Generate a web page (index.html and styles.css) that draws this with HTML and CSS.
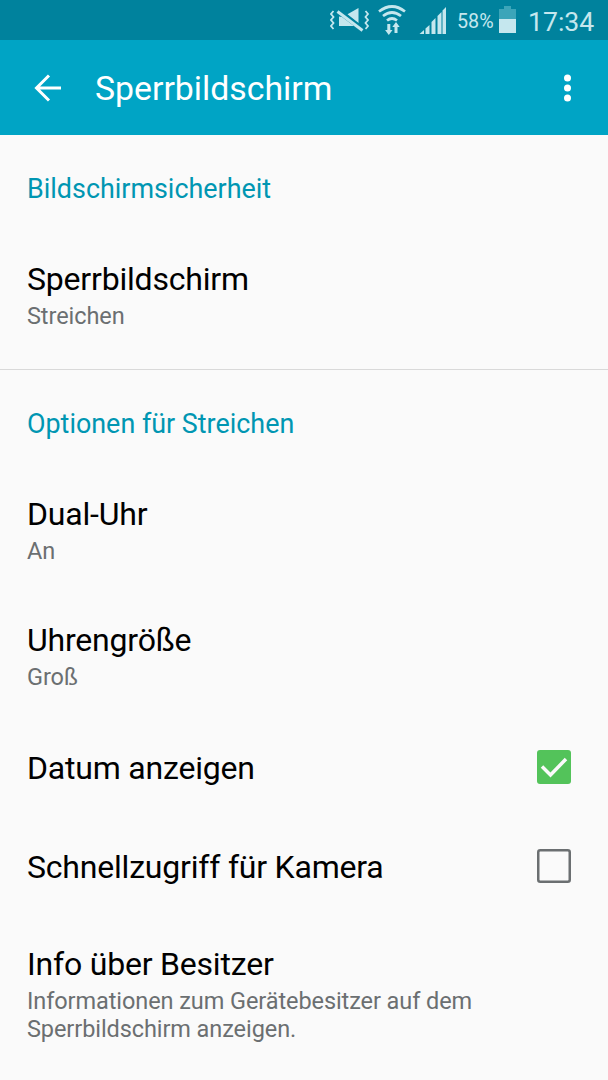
FILE: index.html
```html
<!DOCTYPE html>
<html lang="de">
<head>
<meta charset="utf-8">
<title>Sperrbildschirm</title>
<link rel="stylesheet" href="styles.css">
</head>
<body>
<div class="statusbar">
  <svg class="status-icons" width="127" height="40" viewBox="0 0 127 40">
    <g fill="none" stroke="#c5e7ee" stroke-width="1.800">
      <path d="M3.500 11l-2.500 3 2.500 3-2.500 3 2.500 3-2.500 3 2.500 3M35.500 11l2.500 3-2.500 3 2.500 3-2.500 3 2.500 3-2.500 3"/>
    </g>
    <path fill="#c5e7ee" d="M9 17h7l12.500 9H9zM17.500 14.300L28.500 8v15z"/>
    <path stroke="#00829d" stroke-width="6" d="M7.500 11.500l26 19.500"/>
    <path stroke="#c5e7ee" stroke-width="3" d="M7.500 11.500l25 19"/>
    <path fill="#c5e7ee" d="M9 16.500l3 .5 12 9H9z"/>
    <g fill="none" stroke="#c5e7ee" stroke-width="2.700">
      <path d="M49 11.500q13-10 26 0M53 16q9-7 18 0M57 20.500q5-4 10 0"/>
    </g>
    <path fill="#c5e7ee" d="M57.300 24h3v6h2.200l-3.700 5-3.700-5h2.200zM64.500 33h3v-6h2.200l-3.700-5-3.700 5h2.200z"/>
    <path fill="#c5e7ee" d="M89.500 34l4.500-4v4zM95.500 28.500l4-3.500v9h-4zM101.500 22l4-4v16h-4zM107.500 16l4-4v22h-4zM112.500 10.500l3.500-3.500v27h-3.500z"/>
  </svg>
  <span class="battery-percent">58%</span>
  <svg class="battery" width="17" height="28" viewBox="0 0 17 28">
    <path fill="#3ba5b9" d="M0 3h5V0h7v3h5v10H0z"/>
    <path fill="#c5e7ee" d="M0 13h17v14H0z"/>
  </svg>
  <time class="clock">17:34</time>
</div>
<header class="appbar">
  <svg class="back" width="28" height="28" viewBox="0 0 28 28" fill="none" stroke="#fff" stroke-width="3">
    <path d="M27 14H3M15 1.500L2.500 14 15 26.500"/>
  </svg>
  <h1 class="appbar-title">Sperrbildschirm</h1>
  <svg class="more" width="8" height="28" viewBox="0 0 8 28" fill="#fff">
    <circle cx="3.500" cy="4" r="3.500"/><circle cx="3.500" cy="14" r="3.500"/><circle cx="3.500" cy="24" r="3.500"/>
  </svg>
</header>
<main>
  <section class="group group-security">
    <h2 class="group-title">Bildschirmsicherheit</h2>
    <div class="row">
      <div class="label">Sperrbildschirm</div>
      <div class="summary">Streichen</div>
    </div>
  </section>
  <section class="group">
    <h2 class="group-title">Optionen für Streichen</h2>
    <div class="row">
      <div class="label">Dual-Uhr</div>
      <div class="summary">An</div>
    </div>
    <div class="row">
      <div class="label">Uhrengröße</div>
      <div class="summary">Groß</div>
    </div>
    <div class="row row-check">
      <div class="label">Datum anzeigen</div>
      <svg class="checkbox" width="34" height="34" viewBox="0 0 34 34">
        <rect width="34" height="34" rx="3" fill="#53c35a"/>
        <path d="M5 16.500l8.500 8.500L29 9" fill="none" stroke="#fafafa" stroke-width="3.500"/>
      </svg>
    </div>
    <div class="row row-check">
      <div class="label">Schnellzugriff für Kamera</div>
      <svg class="checkbox" width="34" height="34" viewBox="0 0 34 34">
        <rect x="1.250" y="1.250" width="31.500" height="31.500" rx="2" fill="none" stroke="#6b6f71" stroke-width="2.500"/>
      </svg>
    </div>
    <div class="row">
      <div class="label">Info über Besitzer</div>
      <div class="summary">Informationen zum Gerätebesitzer auf dem<br>Sperrbildschirm anzeigen.</div>
    </div>
  </section>
</main>
</body>
</html>
```
FILE: styles.css
```css
* { box-sizing: border-box; }
body {
  margin: 0;
  width: 608px;
  height: 1080px;
  overflow: hidden;
  background: #fafafa;
  font-family: Roboto, "Liberation Sans", sans-serif;
}
h1, h2 { margin: 0; font-weight: 400; }
.statusbar {
  display: flex;
  align-items: center;
  height: 40px;
  padding-left: 330px;
  background: #00829d;
  color: #c5e7ee;
}
.status-icons { flex: none; }
.battery-percent { width: 42px; font-size: 19.7px; line-height: 40px; padding-top: 4px; }
.battery { flex: none; }
.clock { margin-left: 12px; font-size: 26.6px; line-height: 40px; padding-top: 3px; }
.appbar {
  display: flex;
  align-items: center;
  height: 95px;
  padding: 0 36px 0 34px;
  background: #00a4c5;
  color: #fff;
}
.appbar-title { margin-left: 33px; flex: 1; font-size: 33.8px; line-height: 40px; padding-top: 3px; }
.group-security { padding-bottom: 11px; border-bottom: 1px solid #d9d9d9; }
.group-title {
  height: 97px;
  padding: 38px 27px 0;
  font-size: 26.9px;
  line-height: 32px;
  color: #0096b2;
}
.row { padding: 28px 27px 27px; }
.row-check {
  display: flex;
  align-items: center;
  justify-content: space-between;
  height: 99px;
  padding: 0 37px 2px 27px;
}
.label { font-size: 32px; line-height: 38px; letter-spacing: -0.2px; color: #000; white-space: nowrap; }
.summary { margin: 4px 0 1px; font-size: 23.5px; line-height: 28px; letter-spacing: -0.08px; color: #6b6f71; white-space: nowrap; }
.checkbox { flex: none; margin-top: -1px; }
```
